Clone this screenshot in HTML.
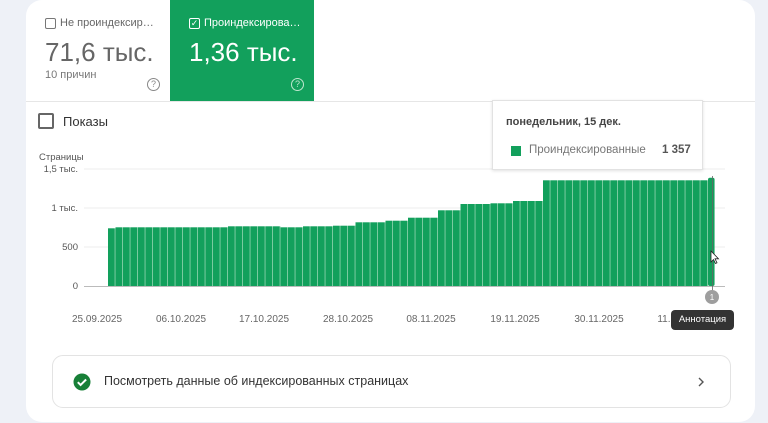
<!DOCTYPE html>
<html><head><meta charset="utf-8"><style>
*{margin:0;padding:0;box-sizing:border-box}
body{width:768px;height:423px;background:#eef1f7;font-family:"Liberation Sans",Arial,sans-serif;position:relative;overflow:hidden}
.card{position:absolute;left:26px;top:0;width:729px;height:422px;background:#fff;border-radius:16px;overflow:hidden}
.abs{position:absolute}
.tab1{left:0;top:0;width:144px;height:101px}
.tab2{left:144px;top:0;width:144px;height:101px;background:#12a05c;color:#fff}
.cb{width:11px;height:11px;border:1.3px solid #777;border-radius:2px}
.lbl{font-size:11px;color:#666}
.big{font-size:26px}
.q{width:13px;height:13px;border:1.2px solid #888;border-radius:50%;font-size:9px;text-align:center;line-height:11px;color:#888}
</style></head><body>
<div class="card">
 <div class="abs tab1">
  <div class="abs cb" style="left:19px;top:18px"></div>
  <div class="abs lbl" style="left:34px;top:17px">Не проиндексир…</div>
  <div class="abs big" style="left:19px;top:37px;color:#666">71,6 тыс.</div>
  <div class="abs lbl" style="left:19px;top:69px;color:#777">10 причин</div>
  <div class="abs q" style="left:121px;top:78px">?</div>
 </div>
 <div class="abs tab2">
  <div class="abs cb" style="left:19px;top:18px;border-color:#fff;font-size:9px;line-height:9px;text-align:center;color:#fff">✓</div>
  <div class="abs lbl" style="left:34px;top:17px;color:#fff">Проиндексирова…</div>
  <div class="abs big" style="left:19px;top:37px">1,36 тыс.</div>
  <div class="abs q" style="left:121px;top:78px;border-color:#bfe6cf;color:#bfe6cf">?</div>
 </div>
 <div class="abs" style="left:0;top:101px;width:729px;height:1px;background:#e6e6e6"></div>
 <div class="abs" style="left:12px;top:113px;width:16px;height:16px;border:2px solid #666;border-radius:2px"></div>
 <div class="abs" style="left:37px;top:114px;font-size:13px;color:#333">Показы</div>
</div>
<svg class="abs" style="left:0;top:0" width="768" height="423">
 <defs><pattern id="b" patternUnits="userSpaceOnUse" x="108" y="0" width="7.5" height="423"><rect x="0" y="0" width="7.5" height="423" fill="#86cfa7"/><rect x="0" y="0" width="6.6" height="423" fill="#12a05c"/></pattern></defs>
 <g font-size="9.5" fill="#555" text-anchor="end" font-family="Liberation Sans,Arial,sans-serif">
  <text x="39" y="160" text-anchor="start" fill="#555">Страницы</text>
  <text x="78" y="172">1,5 тыс.</text><text x="78" y="211">1 тыс.</text><text x="78" y="250">500</text><text x="78" y="289">0</text>
 </g>
 <g stroke="#ececec"><line x1="84" y1="169" x2="725" y2="169"/><line x1="84" y1="208" x2="725" y2="208"/><line x1="84" y1="247" x2="725" y2="247"/></g>
 <g fill="url(#b)">
  <rect x="108" y="228.3" width="7.5" height="57.7"/>
  <rect x="115.5" y="227.3" width="112.5" height="58.7"/>
  <rect x="228" y="226.3" width="52.5" height="59.7"/>
  <rect x="280.5" y="227.3" width="22.5" height="58.7"/>
  <rect x="303" y="226.3" width="30" height="59.7"/>
  <rect x="333" y="225.7" width="22.5" height="60.3"/>
  <rect x="355.5" y="222.3" width="30" height="63.7"/>
  <rect x="385.5" y="220.7" width="22.5" height="65.3"/>
  <rect x="408" y="217.7" width="30" height="68.3"/>
  <rect x="438" y="210.3" width="22.5" height="75.7"/>
  <rect x="460.5" y="204" width="30" height="82"/>
  <rect x="490.5" y="203.3" width="22.5" height="82.7"/>
  <rect x="513" y="201" width="30" height="85"/>
  <rect x="543" y="180.3" width="165" height="105.7"/>
  <rect x="708" y="177.7" width="6.6" height="108.3" rx="2"/>
 </g>
 <line x1="84" y1="286.5" x2="725" y2="286.5" stroke="#bbb"/>
 <line x1="712.5" y1="176" x2="712.5" y2="292" stroke="#666" stroke-width="0.8"/>
 <circle cx="712" cy="297" r="7" fill="#9e9e9e"/><text x="712" y="300" font-size="8" fill="#fff" text-anchor="middle" font-family="Liberation Sans">1</text>
 <path d="M711 251 l0 11 l2.5-2.5 l2 4 l1.5-.7 l-2-4 l3.5 0 z" fill="#fff" stroke="#222" stroke-width="0.8"/>
 <g font-size="10" fill="#666" text-anchor="middle" font-family="Liberation Sans,Arial,sans-serif">
  <text x="97" y="322">25.09.2025</text><text x="181" y="322">06.10.2025</text><text x="264" y="322">17.10.2025</text><text x="348" y="322">28.10.2025</text><text x="431" y="322">08.11.2025</text><text x="515" y="322">19.11.2025</text><text x="599" y="322">30.11.2025</text><text x="682" y="322">11.12.2025</text>
 </g>
</svg>
<div class="abs" style="left:671px;top:310px;width:63px;height:20px;background:#333;border-radius:4px;color:#fff;font-size:9.5px;text-align:center;line-height:20px">Аннотация</div>
<div class="abs" style="left:492px;top:100px;width:211px;height:70px;background:#fff;border:1px solid #e2e2e2;box-shadow:0 1px 3px rgba(0,0,0,.12)">
 <div class="abs" style="left:13px;top:15px;font-size:11px;font-weight:bold;color:#444">понедельник, 15 дек.</div>
 <div class="abs" style="left:18px;top:45px;width:10px;height:10px;background:#12a05c"></div>
 <div class="abs" style="left:36px;top:43px;font-size:11.5px;color:#777">Проиндексированные</div>
 <div class="abs" style="left:169px;top:43px;font-size:11.5px;color:#555;font-weight:bold">1 357</div>
</div>
<div class="abs" style="left:52px;top:355px;width:679px;height:53px;border:1px solid #e3e3e3;border-radius:11px;background:#fff">
 <svg class="abs" style="left:20px;top:17px" width="18" height="18"><circle cx="9" cy="9" r="8.5" fill="#188038"/><path d="M4.8 9.2 l2.8 2.8 l5.5-5.5" stroke="#fff" stroke-width="2" fill="none"/></svg>
 <div class="abs" style="left:51px;top:18px;font-size:12.5px;color:#333">Посмотреть данные об индексированных страницах</div>
 <svg class="abs" style="left:643px;top:20px" width="10" height="12"><path d="M3 2 l4 4 l-4 4" stroke="#555" stroke-width="1.4" fill="none"/></svg>
</div>
</body></html>
